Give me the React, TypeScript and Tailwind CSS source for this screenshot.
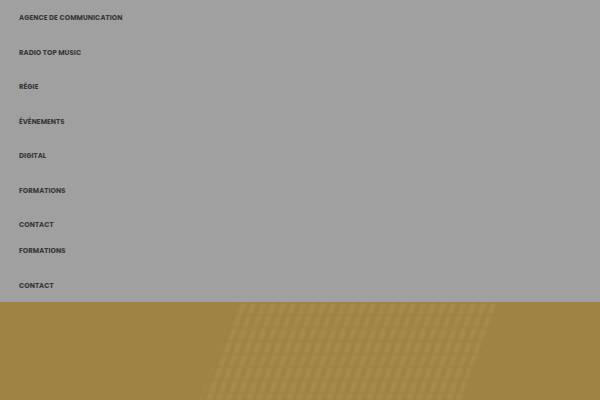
const items = [
  'Agence de communication',
  'Radio Top Music',
  'Régie',
  'Événements',
  'Digital',
  'Formations',
  'Contact',
]

const itemClass = 'h-[34.5px] flex items-center text-[6.9px] font-bold uppercase tracking-[0.05px] text-[#383838]'

export default function App() {
  return (
    <div className="w-full h-[400px] flex flex-col bg-[#a0a0a0] overflow-hidden" style={{ fontFamily: 'Poppins, Inter, "Open Sans", sans-serif' }}>
      <nav className="flex flex-col pl-[19px] pt-[1px] h-[299px]">
        <ul className="flex flex-col">
          {items.map((label) => (
            <li key={label} className={itemClass}>
              {label}
            </li>
          ))}
        </ul>
        <ul className="flex flex-col -mt-[8.5px]">
          <li className={itemClass}>Formations</li>
          <li className={itemClass}>Contact</li>
        </ul>
      </nav>
      <div className="h-[3px] bg-[#a09fa6]" />
      <section className="relative flex-1 bg-[#9f8344]">
        <svg className="absolute inset-0 w-full h-full" width="600" height="98" viewBox="0 0 600 98">
          <defs>
            <filter id="soft">
              <feGaussianBlur stdDeviation="0.8" />
            </filter>
            <pattern id="dash" width="10" height="13" patternUnits="userSpaceOnUse" patternTransform="skewX(-20)">
              <rect x="2" y="1" width="4.5" height="11" rx="1" fill="#b3985f" opacity="0.4" />
            </pattern>
          </defs>
          <polygon points="237,0 497,0 460,98 200,98" fill="url(#dash)" filter="url(#soft)" />
        </svg>
      </section>
    </div>
  )
}
